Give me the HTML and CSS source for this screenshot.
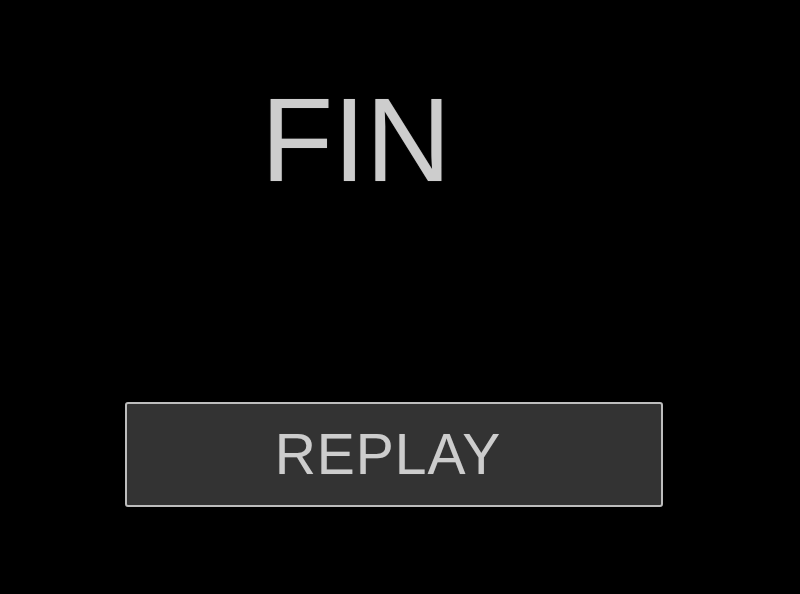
FILE: index.html
```html
<!DOCTYPE html>
<html>
<head>
<meta charset="utf-8">
<link rel="stylesheet" href="styles.css">
</head>
<body>
<main class="screen">
  <h1 class="title">FIN</h1>
  <button class="replay">REPLAY</button>
</main>
</body>
</html>
```
FILE: styles.css
```css
html, body {
  margin: 0;
  padding: 0;
  background: #000;
  width: 800px;
  height: 594px;
  overflow: hidden;
}
.screen {
  display: flex;
  flex-direction: column;
  align-items: flex-start;
  font-family: "Liberation Sans", Arial, sans-serif;
}
.title {
  margin: 81px 0 0 261px;
  height: 118px;
  font-size: 118px;
  line-height: 118px;
  font-weight: normal;
  color: #cdcdcd;
  text-shadow: 0 0 1px #555;
}
.replay {
  margin: 203px 0 0 125px;
  width: 538px;
  height: 105px;
  box-sizing: border-box;
  border: 2px solid #bdbdbd;
  border-radius: 3px;
  background: #333;
  color: #cdcdcd;
  font-family: "Liberation Sans", Arial, sans-serif;
  font-size: 57px;
  line-height: 57px;
  letter-spacing: 1px;
  padding: 0 12px 0 0;
  display: flex;
  align-items: center;
  justify-content: center;
  text-shadow: 0 0 1px #555;
}
```
